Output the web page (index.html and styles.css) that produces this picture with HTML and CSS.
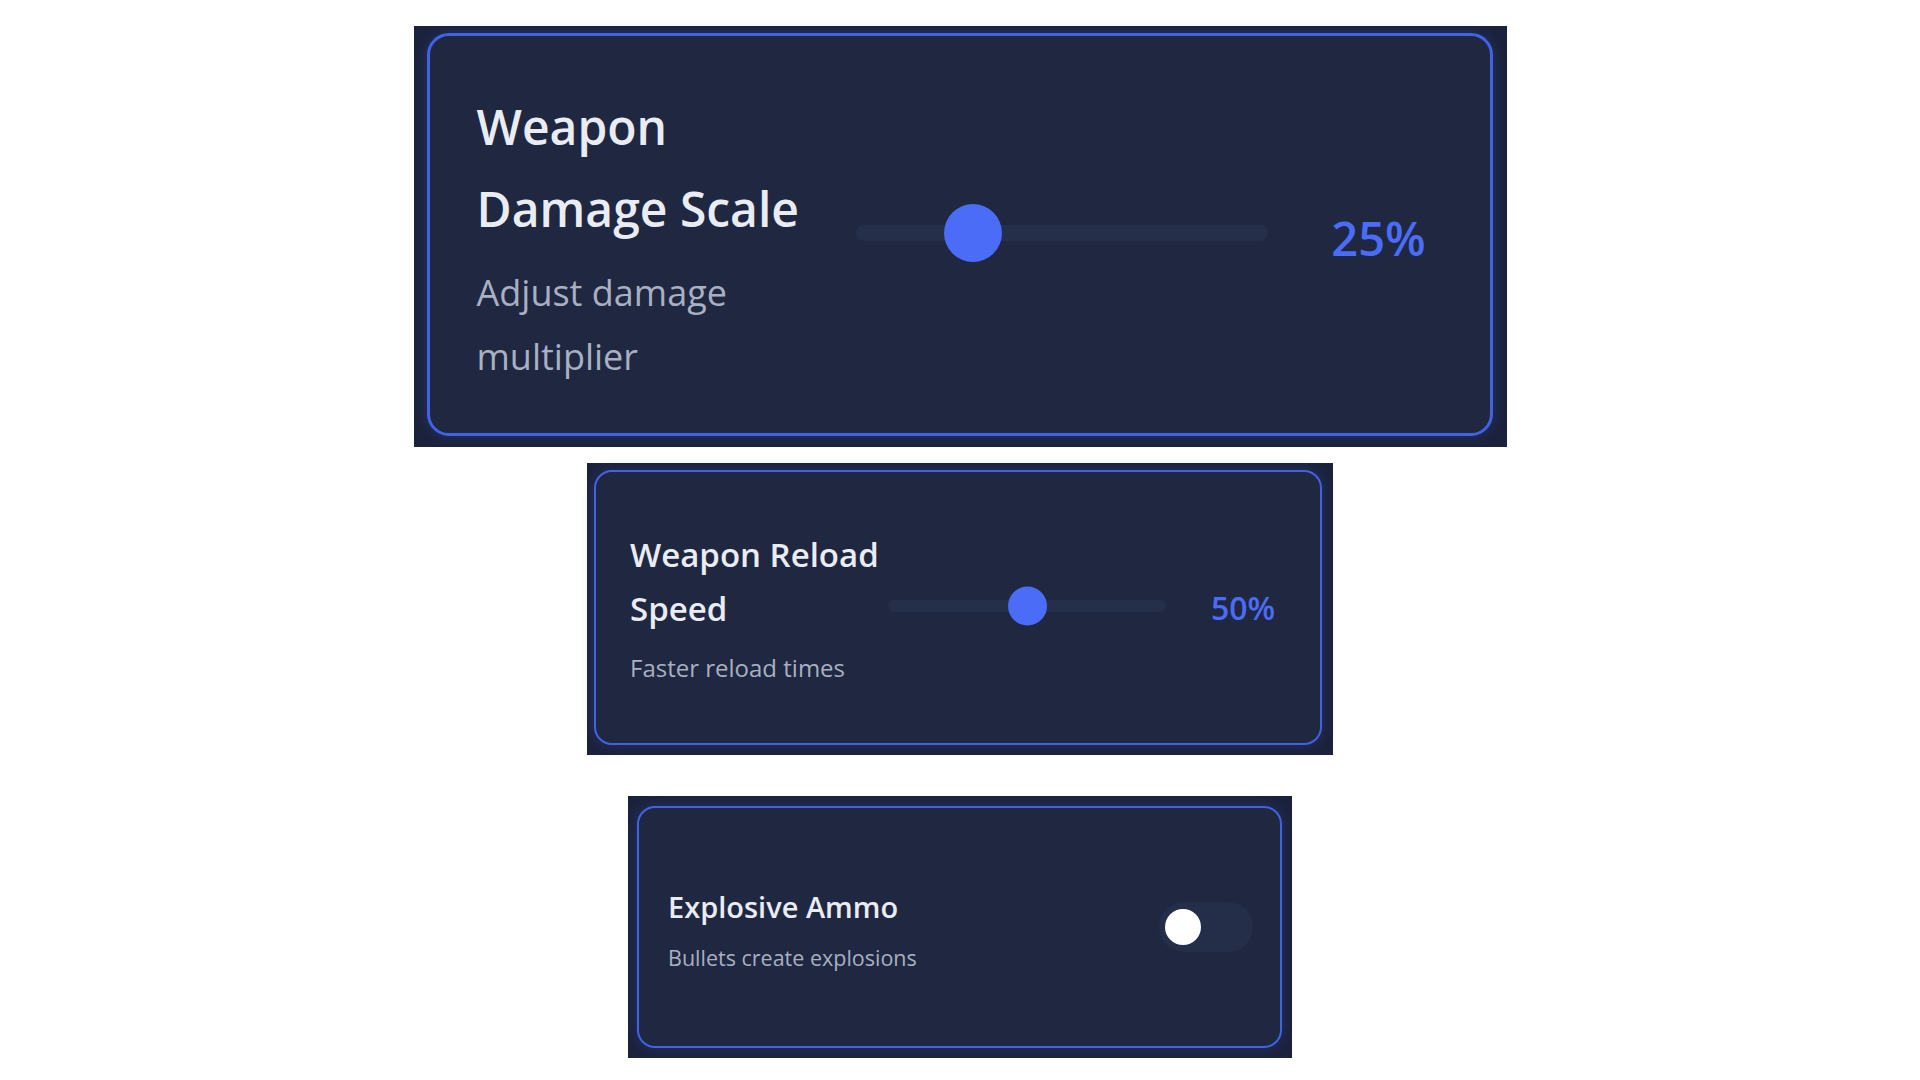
FILE: index.html
```html
<!DOCTYPE html>
<html lang="en">
<head>
<meta charset="utf-8">
<title>Weapon Settings</title>
<link rel="stylesheet" href="styles.css">
</head>
<body>
<div class="stack">
  <div class="frame frame-lg">
    <div class="card card-lg">
      <div class="info">
        <div class="title">Weapon Damage Scale</div>
        <div class="desc">Adjust damage multiplier</div>
      </div>
      <div class="slider">
        <div class="track"><div class="thumb" style="--p:0.25"></div></div>
      </div>
      <div class="value">25%</div>
    </div>
  </div>

  <div class="frame frame-md">
    <div class="card card-md">
      <div class="info">
        <div class="title">Weapon Reload Speed</div>
        <div class="desc">Faster reload times</div>
      </div>
      <div class="slider">
        <div class="track"><div class="thumb" style="--p:0.5"></div></div>
      </div>
      <div class="value">50%</div>
    </div>
  </div>

  <div class="frame frame-sm">
    <div class="card card-sm">
      <div class="info">
        <div class="title">Explosive Ammo</div>
        <div class="desc">Bullets create explosions</div>
      </div>
      <div class="toggle"><div class="knob"></div></div>
    </div>
  </div>
</div>
</body>
</html>
```

FILE: styles.css
```css
html, body {
  margin: 0;
  padding: 0;
  background: #ffffff;
}

body {
  font-family: "Open Sans", "Noto Sans", sans-serif;
}

.stack {
  display: flex;
  flex-direction: column;
  align-items: center;
  padding-top: 26px;
}

.frame {
  background: #1b223c;
  box-sizing: border-box;
}

.card {
  background: #1f2741;
  border: 2px solid #4163e2;
  border-radius: 18px;
  display: flex;
  align-items: center;
  box-shadow: 0 0 14px rgba(60, 90, 210, 0.28);
}

.title {
  color: #e9ecf3;
  font-weight: 600;
}

.desc {
  color: #a8b0c1;
  font-weight: 400;
}

.info {
  flex: none;
}

.slider {
  flex: none;
  display: flex;
  align-items: center;
}

.track {
  position: relative;
  width: 100%;
  background: #262f49;
}

.thumb {
  position: absolute;
  top: 50%;
  border-radius: 50%;
  background: #4a6cf6;
  transform: translateY(-50%);
  left: calc((100% - var(--d)) * var(--p));
}

.value {
  flex: none;
  color: #4a6cf6;
  font-weight: 600;
  text-align: center;
}

/* Large card */
.frame-lg {
  padding: 7px 14px 11px 13px;
}

.card-lg {
  border-width: 3px;
  border-radius: 22px;
  padding: 50px 47px 44px 47px;
}

.card-lg .info {
  width: 346px;
}

.card-lg .title {
  font-size: 48px;
  line-height: 82px;
}

.card-lg .desc {
  font-size: 36px;
  line-height: 64px;
  margin-top: 11px;
}

.card-lg .slider {
  width: 412px;
  height: 58px;
  margin-left: 33px;
  margin-bottom: 9px;
}

.card-lg .track {
  height: 16px;
  border-radius: 8px;
}

.card-lg .thumb {
  --d: 58px;
  width: 58px;
  height: 58px;
}

.card-lg .value {
  width: 128px;
  margin-left: 47px;
  font-size: 47px;
  line-height: 64px;
}

/* Medium card */
.frame-md {
  margin-top: 16px;
  padding: 7px 11px 10px 7px;
}

.card-md {
  padding: 56px 33px 55px 34px;
}

.card-md .info {
  width: 251px;
}

.card-md .title {
  font-size: 33px;
  line-height: 54px;
}

.card-md .desc {
  font-size: 24px;
  line-height: 40px;
  margin-top: 12px;
}

.card-md .slider {
  width: 278px;
  height: 39px;
  margin-left: 7px;
  margin-bottom: 5px;
}

.card-md .track {
  height: 12px;
  border-radius: 6px;
}

.card-md .thumb {
  --d: 39px;
  width: 39px;
  height: 39px;
}

.card-md .value {
  width: 88px;
  margin-left: 33px;
  font-size: 32px;
  line-height: 44px;
}

/* Small card */
.frame-sm {
  margin-top: 41px;
  padding: 10px 10px 10px 9px;
}

.card-sm {
  width: 645px;
  box-sizing: border-box;
  padding: 75px 27px 71px 29px;
}

.card-sm .info {
  flex: 1;
}

.card-sm .title {
  font-size: 29px;
  line-height: 48px;
}

.card-sm .desc {
  font-size: 21.5px;
  line-height: 34px;
  margin-top: 10px;
}

.toggle {
  flex: none;
  position: relative;
  width: 94px;
  height: 50px;
  border-radius: 25px;
  background: #252e48;
  margin-bottom: 4px;
}

.knob {
  position: absolute;
  left: 6px;
  top: 7px;
  width: 36px;
  height: 36px;
  border-radius: 50%;
  background: #ffffff;
}
```
